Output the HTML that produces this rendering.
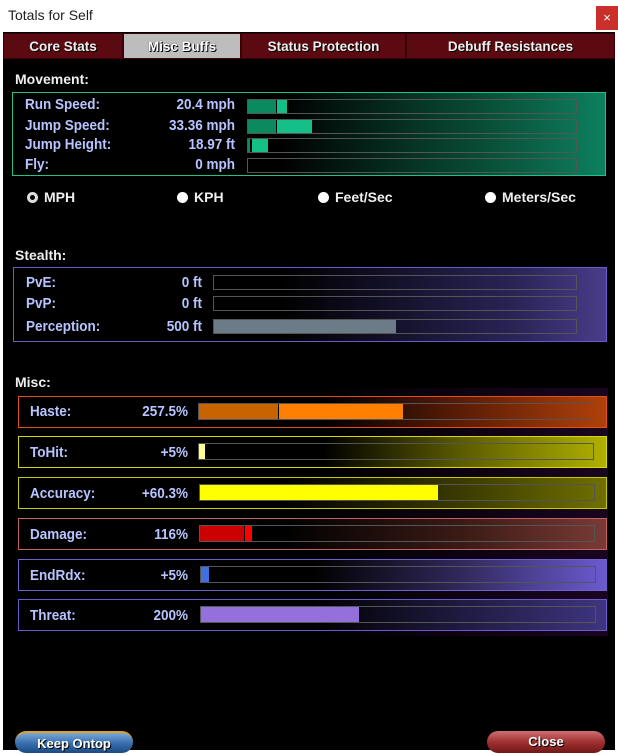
<!DOCTYPE html>
<html><head><style>
*{margin:0;padding:0;box-sizing:border-box}
body{width:618px;height:750px;background:#fff;position:relative;overflow:hidden;font-family:"Liberation Sans",Arial,sans-serif}
.a{position:absolute}
.title{left:8px;top:7px;font-size:14px;color:#222}
.xbtn{left:596px;top:6px;width:22px;height:24px;background:#c9302c;color:#fff;font-size:13px;text-align:center;line-height:24px}
.main{left:3px;top:32px;width:612px;height:718px;background:#000}
.tab{top:33px;height:26px;background:#5a0a10;border:1px solid #3a0005;color:#eee;font-weight:bold;font-size:13.5px;text-align:center;line-height:26px;text-shadow:1px 1px 0 #000}
.lbl{color:#eee;font-weight:bold;font-size:14px;text-shadow:1px 1px 0 #000}
.t{color:#b8c4ff;font-weight:bold;font-size:15px;transform:scaleX(.9);transform-origin:left;margin-top:-1px}
.v{color:#b8c4ff;font-weight:bold;font-size:15px;text-align:right;transform:scaleX(.9);transform-origin:right;margin-top:-1px}
.bar{border:1px solid #555;background:transparent}
.radio{color:#eee;font-weight:bold;font-size:14px}
.dot{display:inline-block;width:11px;height:11px;border-radius:50%;background:#fff;vertical-align:-1px;margin-right:6px}
.btn{height:22px;border-radius:11px;color:#fff;font-weight:bold;font-size:13px;text-align:center;line-height:22px;text-shadow:1px 1px 0 #000}
</style></head><body>
<div class="a title">Totals for Self</div>
<div class="a xbtn">×</div>
<div class="a main"></div>
<div class="a tab" style="left:3px;width:120px">Core Stats</div>
<div class="a tab" style="left:123px;width:118px;background:#bdbdbd;color:#fff;text-shadow:0 0 1px #000,1px 1px 0 #000">Misc Buffs</div>
<div class="a tab" style="left:241px;width:165px">Status Protection</div>
<div class="a tab" style="left:406px;width:209px">Debuff Resistances</div>

<div class="a lbl" style="left:15px;top:71px">Movement:</div>
<div class="a" style="left:12px;top:92px;width:594px;height:84px;border:1px solid #1fc08a;background:linear-gradient(90deg,#000 0%,#000 45%,#0a5a40 85%,#0d8060 100%)"></div>
<div class="a t" style="left:25px;top:97px">Run Speed:</div><div class="a v" style="left:140px;top:97px;width:95px">20.4 mph</div>
<div class="a t" style="left:25px;top:118px">Jump Speed:</div><div class="a v" style="left:140px;top:118px;width:95px">33.36 mph</div>
<div class="a t" style="left:25px;top:137px">Jump Height:</div><div class="a v" style="left:140px;top:137px;width:95px">18.97 ft</div>
<div class="a t" style="left:25px;top:157px">Fly:</div><div class="a v" style="left:140px;top:157px;width:95px">0 mph</div>
<div class="a bar" style="left:247px;top:99px;width:330px;height:15px"><div class="a" style="left:0;top:0;width:28px;height:13px;background:#0b8a60"></div><div class="a" style="left:29px;top:0;width:10px;height:13px;background:#14c088"></div></div>
<div class="a bar" style="left:247px;top:119px;width:330px;height:15px"><div class="a" style="left:0;top:0;width:28px;height:13px;background:#0b8a60"></div><div class="a" style="left:29px;top:0;width:35px;height:13px;background:#14c088"></div></div>
<div class="a bar" style="left:247px;top:138px;width:330px;height:15px"><div class="a" style="left:0;top:0;width:2px;height:13px;background:#0b8a60"></div><div class="a" style="left:4px;top:0;width:16px;height:13px;background:#14c088"></div></div>
<div class="a bar" style="left:247px;top:158px;width:330px;height:15px"></div>

<div class="a radio" style="left:27px;top:189px"><span class="dot" style="background:#000;border:3px solid #ddd"></span>MPH</div>
<div class="a radio" style="left:177px;top:189px"><span class="dot"></span>KPH</div>
<div class="a radio" style="left:318px;top:189px"><span class="dot"></span>Feet/Sec</div>
<div class="a radio" style="left:485px;top:189px"><span class="dot"></span>Meters/Sec</div>

<div class="a lbl" style="left:15px;top:247px">Stealth:</div>
<div class="a" style="left:13px;top:267px;width:594px;height:75px;border:1px solid #6a5acd;background:linear-gradient(90deg,#000 0%,#000 45%,#2a2458 85%,#4a3d8a 100%)"></div>
<div class="a t" style="left:26px;top:275px">PvE:</div><div class="a v" style="left:120px;top:275px;width:82px">0 ft</div>
<div class="a t" style="left:26px;top:296px">PvP:</div><div class="a v" style="left:120px;top:296px;width:82px">0 ft</div>
<div class="a t" style="left:26px;top:319px">Perception:</div><div class="a v" style="left:120px;top:319px;width:82px">500 ft</div>
<div class="a bar" style="left:213px;top:275px;width:364px;height:15px"></div>
<div class="a bar" style="left:213px;top:296px;width:364px;height:15px"></div>
<div class="a bar" style="left:213px;top:319px;width:364px;height:15px"><div class="a" style="left:0;top:0;width:182px;height:13px;background:#6b7b88"></div></div>

<div class="a lbl" style="left:15px;top:374px">Misc:</div>
<div class="a" style="left:12px;top:388px;width:596px;height:248px;background:linear-gradient(90deg,#000 0%,#000 50%,#1a0520 100%)"></div>

<div class="a" style="left:18px;top:396px;width:589px;height:32px;border:1px solid #e0501a;background:linear-gradient(90deg,#000 0%,#000 52%,#5a1c05 75%,#b0400a 100%)"></div>
<div class="a t" style="left:30px;top:404px">Haste:</div><div class="a v" style="left:110px;top:404px;width:78px">257.5%</div>
<div class="a bar" style="left:198px;top:403px;width:396px;height:17px"><div class="a" style="left:0;top:0;width:79px;height:15px;background:#c86400"></div><div class="a" style="left:80px;top:0;width:124px;height:15px;background:#ff8000"></div></div>

<div class="a" style="left:18px;top:436px;width:589px;height:32px;border:1px solid #d8d800;background:linear-gradient(90deg,#000 0%,#000 52%,#5a5a00 75%,#b0b000 100%)"></div>
<div class="a t" style="left:30px;top:445px">ToHit:</div><div class="a v" style="left:110px;top:445px;width:78px">+5%</div>
<div class="a bar" style="left:198px;top:443px;width:396px;height:17px"><div class="a" style="left:0;top:0;width:6px;height:15px;background:#ffff90"></div></div>

<div class="a" style="left:18px;top:477px;width:589px;height:32px;border:1px solid #c8c800;background:linear-gradient(90deg,#000 0%,#000 45%,#3a3a00 75%,#707000 100%)"></div>
<div class="a t" style="left:30px;top:486px">Accuracy:</div><div class="a v" style="left:110px;top:486px;width:78px">+60.3%</div>
<div class="a bar" style="left:199px;top:484px;width:396px;height:17px"><div class="a" style="left:0;top:0;width:238px;height:15px;background:#ffff00"></div></div>

<div class="a" style="left:18px;top:518px;width:589px;height:32px;border:1px solid #c06060;background:linear-gradient(90deg,#000 0%,#000 45%,#3a1a15 75%,#7a3a35 100%)"></div>
<div class="a t" style="left:30px;top:527px">Damage:</div><div class="a v" style="left:110px;top:527px;width:78px">116%</div>
<div class="a bar" style="left:199px;top:525px;width:396px;height:17px"><div class="a" style="left:0;top:0;width:44px;height:15px;background:#cc0000"></div><div class="a" style="left:45px;top:0;width:7px;height:15px;background:#ff0000"></div></div>

<div class="a" style="left:18px;top:559px;width:589px;height:32px;border:1px solid #7060d0;background:linear-gradient(90deg,#000 0%,#000 50%,#30285a 75%,#6a5ad0 100%)"></div>
<div class="a t" style="left:30px;top:568px">EndRdx:</div><div class="a v" style="left:110px;top:568px;width:78px">+5%</div>
<div class="a bar" style="left:200px;top:566px;width:396px;height:17px"><div class="a" style="left:0;top:0;width:8px;height:15px;background:#4070e0"></div></div>

<div class="a" style="left:18px;top:599px;width:589px;height:32px;border:1px solid #6a5acd;background:linear-gradient(90deg,#000 0%,#000 50%,#1e1a40 75%,#3e3580 100%)"></div>
<div class="a t" style="left:30px;top:608px">Threat:</div><div class="a v" style="left:110px;top:608px;width:78px">200%</div>
<div class="a bar" style="left:200px;top:606px;width:396px;height:17px"><div class="a" style="left:0;top:0;width:158px;height:15px;background:#9370db"></div></div>

<div class="a btn" style="left:15px;top:731px;width:118px;background:linear-gradient(#7aa8d8,#3a70b0 50%,#1a4a80);border-top:2px solid #e0a020">Keep Ontop</div>
<div class="a btn" style="left:487px;top:731px;width:118px;background:linear-gradient(#d07070,#a03030 50%,#701818)">Close</div>
</body></html>
